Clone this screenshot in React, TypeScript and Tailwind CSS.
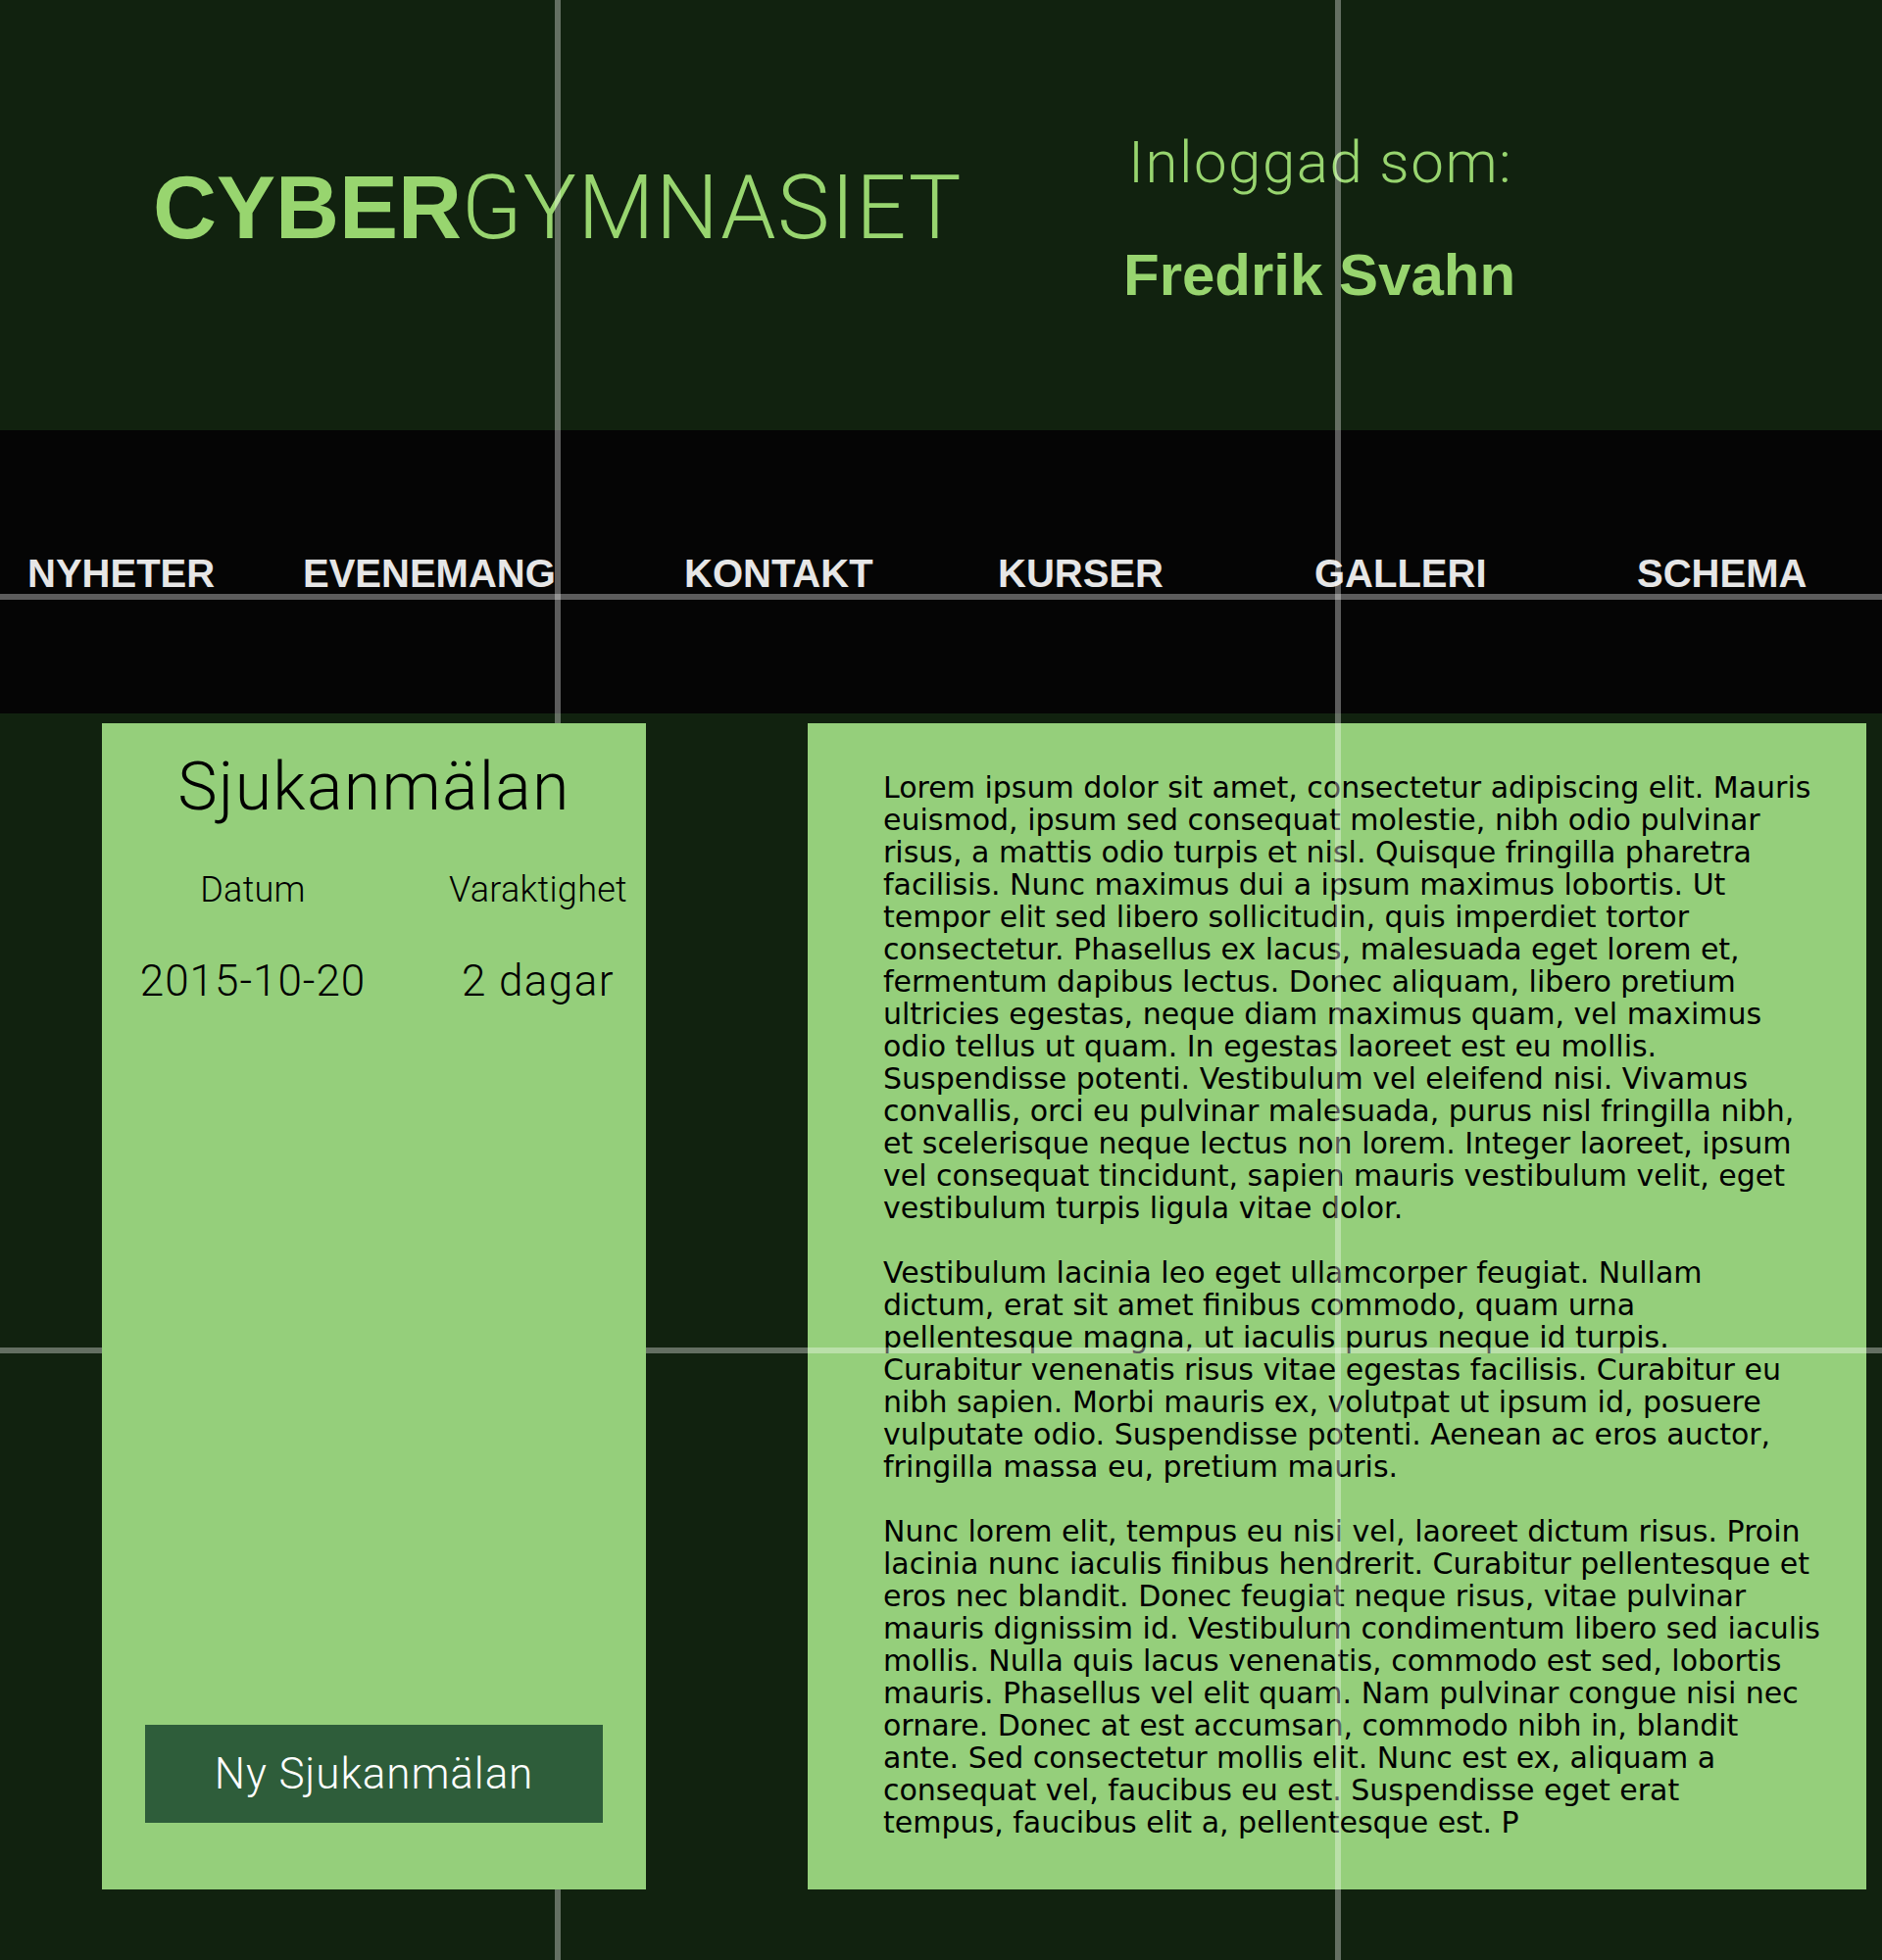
import React from 'react';

const NAV = [
  { label: 'NYHETER', w: 'w-[309px] pl-[28px]' },
  { label: 'EVENEMANG', w: 'w-[389px]' },
  { label: 'KONTAKT', w: 'w-[320px]' },
  { label: 'KURSER', w: 'w-[323px]' },
  { label: 'GALLERI', w: 'w-[329px]' },
  { label: 'SCHEMA', w: 'w-auto' },
];

const PARAGRAPHS = [
  [
    'Lorem ipsum dolor sit amet, consectetur adipiscing elit. Mauris',
    'euismod, ipsum sed consequat molestie, nibh odio pulvinar',
    'risus, a mattis odio turpis et nisl. Quisque fringilla pharetra',
    'facilisis. Nunc maximus dui a ipsum maximus lobortis. Ut',
    'tempor elit sed libero sollicitudin, quis imperdiet tortor',
    'consectetur. Phasellus ex lacus, malesuada eget lorem et,',
    'fermentum dapibus lectus. Donec aliquam, libero pretium',
    'ultricies egestas, neque diam maximus quam, vel maximus',
    'odio tellus ut quam. In egestas laoreet est eu mollis.',
    'Suspendisse potenti. Vestibulum vel eleifend nisi. Vivamus',
    'convallis, orci eu pulvinar malesuada, purus nisl fringilla nibh,',
    'et scelerisque neque lectus non lorem. Integer laoreet, ipsum',
    'vel consequat tincidunt, sapien mauris vestibulum velit, eget',
    'vestibulum turpis ligula vitae dolor.',
  ],
  [
    'Vestibulum lacinia leo eget ullamcorper feugiat. Nullam',
    'dictum, erat sit amet finibus commodo, quam urna',
    'pellentesque magna, ut iaculis purus neque id turpis.',
    'Curabitur venenatis risus vitae egestas facilisis. Curabitur eu',
    'nibh sapien. Morbi mauris ex, volutpat ut ipsum id, posuere',
    'vulputate odio. Suspendisse potenti. Aenean ac eros auctor,',
    'fringilla massa eu, pretium mauris.',
  ],
  [
    'Nunc lorem elit, tempus eu nisi vel, laoreet dictum risus. Proin',
    'lacinia nunc iaculis finibus hendrerit. Curabitur pellentesque et',
    'eros nec blandit. Donec feugiat neque risus, vitae pulvinar',
    'mauris dignissim id. Vestibulum condimentum libero sed iaculis',
    'mollis. Nulla quis lacus venenatis, commodo est sed, lobortis',
    'mauris. Phasellus vel elit quam. Nam pulvinar congue nisi nec',
    'ornare. Donec at est accumsan, commodo nibh in, blandit',
    'ante. Sed consectetur mollis elit. Nunc est ex, aliquam a',
    'consequat vel, faucibus eu est. Suspendisse eget erat',
    'tempus, faucibus elit a, pellentesque est. P',
  ],
];

function App() {
  return (
    <div className="relative h-[2000px] overflow-hidden bg-[#11220f] font-['Liberation_Sans',Arial,sans-serif]">
      {/* Header */}
      <header className="flex h-[439px]">
        <div className="w-[1146px] shrink-0 pl-[156px] pt-[167px]">
          <h1 className="whitespace-nowrap text-[90px] leading-none text-[#98d56f]">
            <span className="font-bold">CYBER</span>
            <span className="font-['Roboto',sans-serif] font-light tracking-[1.5px]">GYMNASIET</span>
          </h1>
        </div>
        <div className="pt-[136px] text-[#98d56f]">
          <p className="ml-[5px] whitespace-nowrap font-['Roboto',sans-serif] text-[60px] font-light leading-none tracking-[1.5px]">
            Inloggad som:
          </p>
          <p className="mt-[55px] whitespace-nowrap text-[60px] font-bold leading-none">Fredrik Svahn</p>
        </div>
      </header>

      {/* Navigation */}
      <nav className="h-[289px] bg-[#050505] pt-[126px]">
        <ul className="flex">
          {NAV.map((item) => (
            <li key={item.label} className={`${item.w} shrink-0 text-[40px] font-bold leading-none text-[#e6e6e6]`}>
              {item.label}
            </li>
          ))}
        </ul>
      </nav>

      {/* Content */}
      <main className="flex pt-[10px]">
        <section className="relative z-20 ml-[104px] flex h-[1190px] w-[555px] shrink-0 flex-col bg-[#95cf7b] pt-[31px] text-black">
          <h2 className="text-center font-['Roboto',sans-serif] text-[68px] font-light leading-none tracking-[1.3px]">Sjukanmälan</h2>
          <div className="mt-[53px] grid grid-cols-[308px_247px] font-['Roboto',sans-serif] font-light">
            <span className="text-center text-[36px] leading-none tracking-[0.3px]">Datum</span>
            <span className="whitespace-nowrap pl-[27px] text-center text-[36px] leading-none tracking-[0.3px]">Varaktighet</span>
            <span className="mt-[53px] text-center text-[44px] leading-none tracking-[1px]">2015-10-20</span>
            <span className="mt-[53px] whitespace-nowrap pl-[27px] text-center text-[44px] leading-none tracking-[1.4px]">2 dagar</span>
          </div>
          <button className="mx-[44px] mb-[68px] mt-auto flex h-[100px] items-center justify-center bg-[#2e5d3a] font-['Roboto',sans-serif] text-[44px] font-light tracking-[0.9px] text-white">
            Ny Sjukanmälan
          </button>
        </section>

        <section className="ml-[165px] h-[1190px] w-[1080px] shrink-0 bg-[#95cf7b] pl-[77px] pt-[49px] font-['DejaVu_Sans',sans-serif] text-[30px] leading-[33px] text-black">
          {PARAGRAPHS.map((lines, i) => (
            <p key={i} className={i > 0 ? 'mt-[33px]' : ''}>
              {lines.map((line) => (
                <span key={line} className="block whitespace-nowrap">
                  {line}
                </span>
              ))}
            </p>
          ))}
        </section>
      </main>

      {/* Layout guide lines */}
      <div className="pointer-events-none absolute left-[566px] top-0 z-10 h-full w-[6px] bg-white/35" />
      <div className="pointer-events-none absolute left-[1362px] top-0 z-10 h-full w-[6px] bg-white/35" />
      <div className="pointer-events-none absolute left-0 top-[606px] z-10 h-[6px] w-full bg-white/35" />
      <div className="pointer-events-none absolute left-0 top-[1375px] z-10 h-[6px] w-full bg-white/35" />
    </div>
  );
}

export default App;
